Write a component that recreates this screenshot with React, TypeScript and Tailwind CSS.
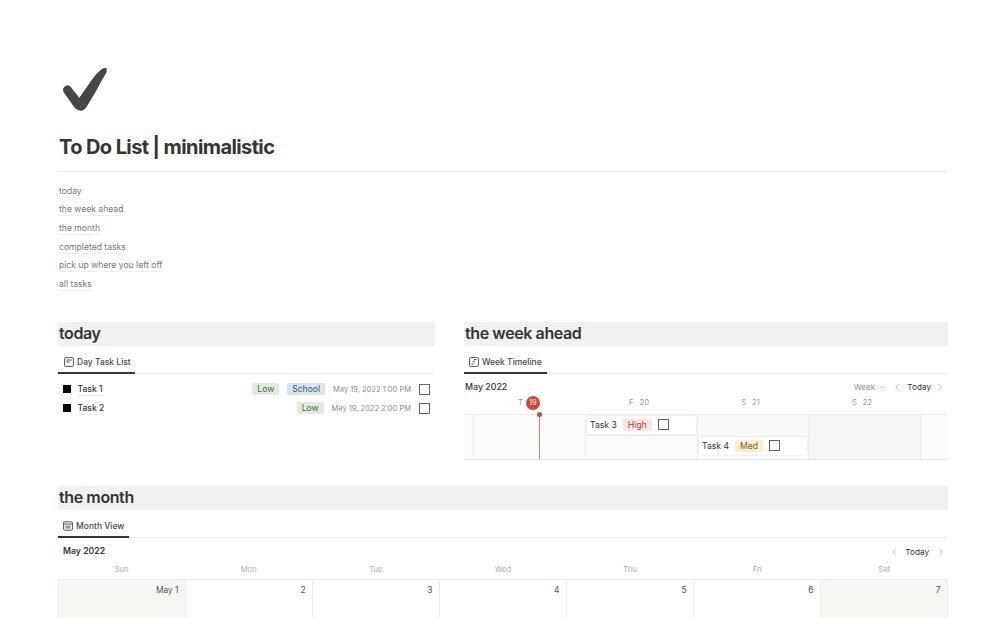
import React from 'react';
import { ChevronLeft, ChevronRight, ChevronDown } from 'lucide-react';

const links = ['today', 'the week ahead', 'the month', 'completed tasks', 'pick up where you left off', 'all tasks'];

const monthDays = [
  { name: 'Sun', date: 'May 1', weekend: true },
  { name: 'Mon', date: '2' },
  { name: 'Tue', date: '3' },
  { name: 'Wed', date: '4' },
  { name: 'Thu', date: '5' },
  { name: 'Fri', date: '6' },
  { name: 'Sat', date: '7', weekend: true },
];

const Tag = ({ label, color }: { label: string; color: string }) => (
  <span className={`rounded-[2px] px-[5px] text-[8.6px] leading-[12px] ${color}`}>{label}</span>
);

const Checkbox = () => <span className="block w-[11px] h-[11px] border-[1.3px] border-[#66655f] shrink-0" />;

const Heading = ({ children }: { children: React.ReactNode }) => (
  <h2 className="h-[24px] bg-[#f1f1ef] pl-px text-[16px] leading-[23px] tracking-[-0.4px] font-semibold text-[#37352f]">{children}</h2>
);

const Tab = ({ icon, label, width, pad }: { icon: React.ReactNode; label: string; width: string; pad: string }) => (
  <div className="h-[28px] border-b border-[#ededec]">
    <div className={`h-[28px] ${width} ${pad} border-b-2 border-[#37352f] flex items-center gap-[3px] pt-[6px] text-[8.5px] font-medium text-[#4a4843]`}>
      {icon}
      <span>{label}</span>
    </div>
  </div>
);

const PageIcon = () => (
  <svg width="10" height="10" viewBox="0 0 10 10" fill="none" stroke="#55534e" strokeWidth="1">
    <rect x="0.6" y="0.6" width="8.8" height="8.8" rx="1" />
    <path d="M2.4 3h5.2M2.4 5h3" />
  </svg>
);

const TimelineIcon = () => (
  <svg width="10" height="10" viewBox="0 0 10 10" fill="none" stroke="#55534e" strokeWidth="1">
    <rect x="0.6" y="0.6" width="8.8" height="8.8" rx="1" />
    <path d="M5 2.6h2.6M3.6 4.8h2.4M2.4 7h2.2" />
  </svg>
);

const CalendarIcon = () => (
  <svg width="10" height="10" viewBox="0 0 10 10" fill="none" stroke="#55534e" strokeWidth="1">
    <rect x="0.6" y="0.8" width="8.8" height="8.4" rx="1" />
    <path d="M0.6 3h8.8" />
    <path d="M2.8 4.8h1.5v2.4H2.8zM5.6 4.8h1.4v2.4H5.6z" strokeWidth="0.7" />
  </svg>
);

const TaskRow = ({ name, tags, date }: { name: string; tags: React.ReactNode; date: string }) => (
  <div className="h-[19px] flex items-center px-[5px]">
    <span className="w-[8px] h-[8px] bg-black shrink-0" />
    <span className="ml-[6.5px] text-[8.6px] font-medium text-[#37352f] border-b border-[#ededec] leading-[12px]">{name}</span>
    <div className="ml-auto flex items-center gap-[8px]">{tags}</div>
    <span className="ml-[8px] text-[7.5px] text-[#8f8e8a] whitespace-nowrap">{date}</span>
    <span className="ml-[8px]">
      <Checkbox />
    </span>
  </div>
);

const Card = ({ name, tag, color }: { name: string; tag: string; color: string }) => (
  <div className="h-[18px] mx-px bg-white rounded-[2px] shadow-[0_0_2px_rgba(15,15,15,0.2)] flex items-center pl-[3px] gap-[6px]">
    <span className="text-[8.6px] text-[#37352f]">{name}</span>
    <Tag label={tag} color={color} />
    <Checkbox />
  </div>
);

const DayLabel = ({ letter, num }: { letter: string; num: string }) => (
  <div className="h-[14px] -mt-[4px] flex items-center justify-center gap-[6px] pr-[6px]">
    <span>{letter}</span>
    <span>{num}</span>
  </div>
);

const WeekTimeline = () => (
  <div>
    <div className="h-[26px] flex items-center pl-px pr-[3px]">
      <span className="text-[8.8px] font-medium text-[#37352f]">May 2022</span>
      <div className="ml-auto flex items-center text-[8.2px] text-[#8f8e8a]">
        Week
        <ChevronDown size={8} strokeWidth={1.5} className="ml-[2.5px]" />
        <ChevronLeft size={10} strokeWidth={1.5} className="ml-[6px]" />
        <span className="ml-[5.5px] text-[#37352f]">Today</span>
        <ChevronRight size={10} strokeWidth={1.5} className="ml-[4px]" />
      </div>
    </div>
    <div className="h-[15px] grid grid-cols-[10px_112px_112px_111px_112px_27px] text-[7.6px] text-[#9b9a97] border-b border-[#ededec]">
      <div />
      <div className="h-[14px] -mt-[4px] flex items-center justify-center gap-[3px] pr-[2px]">
        <span>T</span>
        <span className="w-[14px] h-[14px] rounded-full bg-[#c9483a] text-white flex items-center justify-center text-[7px]">19</span>
      </div>
      <DayLabel letter="F" num="20" />
      <DayLabel letter="S" num="21" />
      <DayLabel letter="S" num="22" />
    </div>
    <div className="h-[45px] grid grid-cols-[10px_112px_112px_111px_112px_27px] border-b border-[#e6e6e4]">
      <div className="bg-[#fbfbfa] border-r border-[#ededec]" />
      <div className="relative bg-[#fbfbfa] border-r border-[#ededec]">
        <div className="absolute left-[65px] top-0 h-[44px] border-l border-[#e57f73]" />
        <span className="absolute left-[63px] -top-[3px] w-[5px] h-[5px] rounded-full bg-[#c9483a]" />
      </div>
      <div className="border-r border-[#ededec]">
        <div className="h-[21px] border-b border-[#ededec] pt-[1px]">
          <Card name="Task 3" tag="High" color="bg-[#fbe4e1] text-[#8e4a45]" />
        </div>
        <div className="h-[23px] bg-[#fbfbfa]" />
      </div>
      <div className="border-r border-[#ededec]">
        <div className="h-[22px] bg-[#fafaf9]" />
        <Card name="Task 4" tag="Med" color="bg-[#fbeecb] text-[#7d6433]" />
      </div>
      <div className="bg-[#f6f6f4] border-r border-[#ededec]" />
      <div className="bg-[#fcfcfb]" />
    </div>
  </div>
);

const MonthView = () => (
  <div>
    <div className="h-[27px] flex items-center pl-[5px] pr-[2.5px] pt-[1px]">
      <span className="text-[8.7px] font-semibold text-[#37352f]">May 2022</span>
      <div className="ml-auto flex items-center text-[8.2px] text-[#8f8e8a]">
        <ChevronLeft size={10} strokeWidth={1.5} />
        <span className="ml-[6.5px] text-[#37352f]">Today</span>
        <ChevronRight size={10} strokeWidth={1.5} className="ml-[6.5px]" />
      </div>
    </div>
    <div className="grid grid-cols-7 h-[15px] border-b border-[#ededec]">
      {monthDays.map((d) => (
        <div key={d.name} className="text-center text-[7.6px] leading-[10px] text-[#aeada9]">
          {d.name}
        </div>
      ))}
    </div>
    <div className="grid grid-cols-7 h-[60px] border-l border-[#ededec]">
      {monthDays.map((d) => (
        <div
          key={d.name}
          className={`border-r border-[#ededec] pr-[6.5px] pt-[4px] text-right text-[8.4px] leading-[13px] text-[#55534e] ${d.weekend ? 'bg-[#f7f6f3]' : ''}`}
        >
          {d.date}
        </div>
      ))}
    </div>
  </div>
);

export default function App() {
  return (
    <div className="h-[618px] overflow-hidden bg-white pl-[58px] pr-[57px] font-['Inter','Liberation_Sans',sans-serif]">
      <div className="pt-[67px]">
        <svg width="47" height="45" viewBox="0 0 47 45" className="block ml-[3px]">
          <path
            d="M2 22.3Q3 19 6.7 18.3Q9 18.3 10.7 21.3L18.3 30.7L30.7 13Q35.5 6 40.7 2Q43.5 .5 45.7 1.3Q46 3.5 45.2 6Q40 14 35.7 23L25.7 39.7Q23 43.7 20 43.7Q16.5 43.7 14 41.3L3.3 26.3Q1.7 24.5 2 22.3Z"
            fill="#474644"
          />
        </svg>
      </div>
      <h1 className="mt-[21px] ml-px text-[20px] leading-[28px] tracking-[-0.6px] font-bold text-[#37352f]">To Do List | minimalistic</h1>
      <div className="mt-[10px] border-t border-[#ededec]" />
      <ul className="mt-[10px] ml-px">
        {links.map((l) => (
          <li key={l} className="h-[18.6px] flex items-center">
            <span className="text-[8.6px] leading-[12px] text-[#7a7974] border-b border-[#efefed]">{l}</span>
          </li>
        ))}
      </ul>
      <div className="mt-[28.4px] grid grid-cols-[377px_484px] gap-x-[29px]">
        <section>
          <Heading>today</Heading>
          <Tab icon={<PageIcon />} label="Day Task List" width="w-[77px]" pad="pl-[6px]" />
          <div className="pt-[6px]">
            <TaskRow
              name="Task 1"
              date="May 19, 2022 1:00 PM"
              tags={
                <>
                  <Tag label="Low" color="bg-[#dfecdd] text-[#3f6b4d]" />
                  <Tag label="School" color="bg-[#d8e5ee] text-[#2f5a78]" />
                </>
              }
            />
            <TaskRow name="Task 2" date="May 19, 2022 2:00 PM" tags={<Tag label="Low" color="bg-[#dfecdd] text-[#3f6b4d]" />} />
          </div>
        </section>
        <section>
          <Heading>the week ahead</Heading>
          <Tab icon={<TimelineIcon />} label="Week Timeline" width="w-[83px]" pad="pl-[5px]" />
          <WeekTimeline />
        </section>
      </div>
      <section className="mt-[26px]">
        <Heading>the month</Heading>
        <Tab icon={<CalendarIcon />} label="Month View" width="w-[71px]" pad="pl-[5px]" />
        <MonthView />
      </section>
    </div>
  );
}
